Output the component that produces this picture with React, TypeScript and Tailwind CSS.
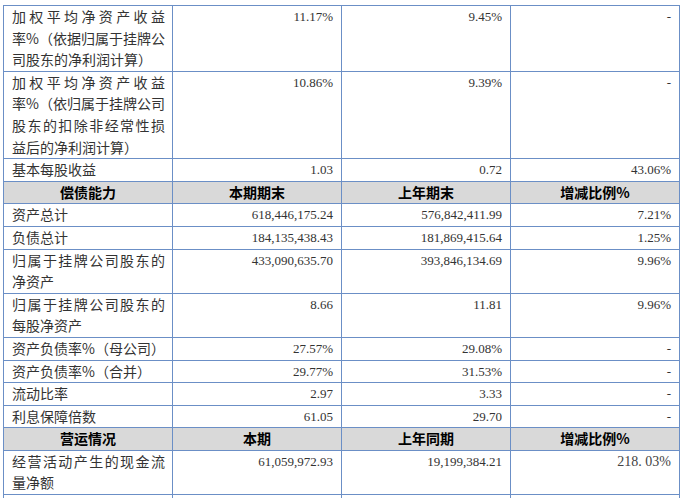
import type { ReactNode } from 'react';

const CJK = "font-['Noto_Sans_CJK_SC',sans-serif]";
const NUM = "font-['Liberation_Serif','Noto_Sans_CJK_SC',serif]";

type Row =
  | { kind: 'head'; cells: string[] }
  | { kind: 'data'; label: string[]; values: ReactNode[] };

const rows: Row[] = [
  {
    kind: 'data',
    label: ['加权平均净资产收益', '率%（依据归属于挂牌公', '司股东的净利润计算）'],
    values: ['11.17%', '9.45%', '-'],
  },
  {
    kind: 'data',
    label: [
      '加权平均净资产收益',
      '率%（依归属于挂牌公司',
      '股东的扣除非经常性损',
      '益后的净利润计算）',
    ],
    values: ['10.86%', '9.39%', '-'],
  },
  { kind: 'data', label: ['基本每股收益'], values: ['1.03', '0.72', '43.06%'] },
  { kind: 'head', cells: ['偿债能力', '本期期末', '上年期末', '增减比例%'] },
  {
    kind: 'data',
    label: ['资产总计'],
    values: ['618,446,175.24', '576,842,411.99', '7.21%'],
  },
  {
    kind: 'data',
    label: ['负债总计'],
    values: ['184,135,438.43', '181,869,415.64', '1.25%'],
  },
  {
    kind: 'data',
    label: ['归属于挂牌公司股东的', '净资产'],
    values: ['433,090,635.70', '393,846,134.69', '9.96%'],
  },
  {
    kind: 'data',
    label: ['归属于挂牌公司股东的', '每股净资产'],
    values: ['8.66', '11.81', '9.96%'],
  },
  {
    kind: 'data',
    label: ['资产负债率%（母公司）'],
    values: ['27.57%', '29.08%', '-'],
  },
  {
    kind: 'data',
    label: ['资产负债率%（合并）'],
    values: ['29.77%', '31.53%', '-'],
  },
  { kind: 'data', label: ['流动比率'], values: ['2.97', '3.33', '-'] },
  { kind: 'data', label: ['利息保障倍数'], values: ['61.05', '29.70', '-'] },
  { kind: 'head', cells: ['营运情况', '本期', '上年同期', '增减比例%'] },
  {
    kind: 'data',
    label: ['经营活动产生的现金流', '量净额'],
    values: [
      '61,059,972.93',
      '19,199,384.21',
      <span className="text-[14px] text-[#444]">218. 03%</span>,
    ],
  },
];

function Label({ lines }: { lines: string[] }) {
  return (
    <div className={`${CJK} whitespace-nowrap text-[14px] text-[#333]`}>
      {lines.map((l, i) => (
        <div
          key={i}
          className={
            i < lines.length - 1
              ? 'text-justify [text-align-last:justify]'
              : 'text-left'
          }
        >
          {l}
        </div>
      ))}
    </div>
  );
}

export default function App() {
  return (
    <div className="min-h-[498px] bg-white pl-[3px] pt-[5px]">
      <div className="w-[677px] border-l border-t border-[#6b8fc6] leading-[21.6px]">
        {rows.map((r, i) =>
          r.kind === 'head' ? (
            <div key={i} className="flex border-b border-[#6b8fc6] bg-[#d9d9d9]">
              {r.cells.map((c, j) => (
                <div
                  key={j}
                  className={`${CJK} w-[169px] border-r border-[#6b8fc6] text-center text-[14px] font-bold text-black`}
                >
                  {c}
                </div>
              ))}
            </div>
          ) : (
            <div key={i} className="flex border-b border-[#6b8fc6]">
              <div className="w-[169px] border-r border-[#6b8fc6] pl-2 pr-[7px]">
                <Label lines={r.label} />
              </div>
              {r.values.map((v, j) => (
                <div
                  key={j}
                  className={`${NUM} w-[169px] border-r border-[#6b8fc6] px-2 text-right text-[13px] text-[#333]`}
                >
                  {v}
                </div>
              ))}
            </div>
          ),
        )}
        <div className="flex h-[22px]">
          {[0, 1, 2, 3].map((k) => (
            <div key={k} className="w-[169px] border-r border-[#6b8fc6]" />
          ))}
        </div>
      </div>
    </div>
  );
}
